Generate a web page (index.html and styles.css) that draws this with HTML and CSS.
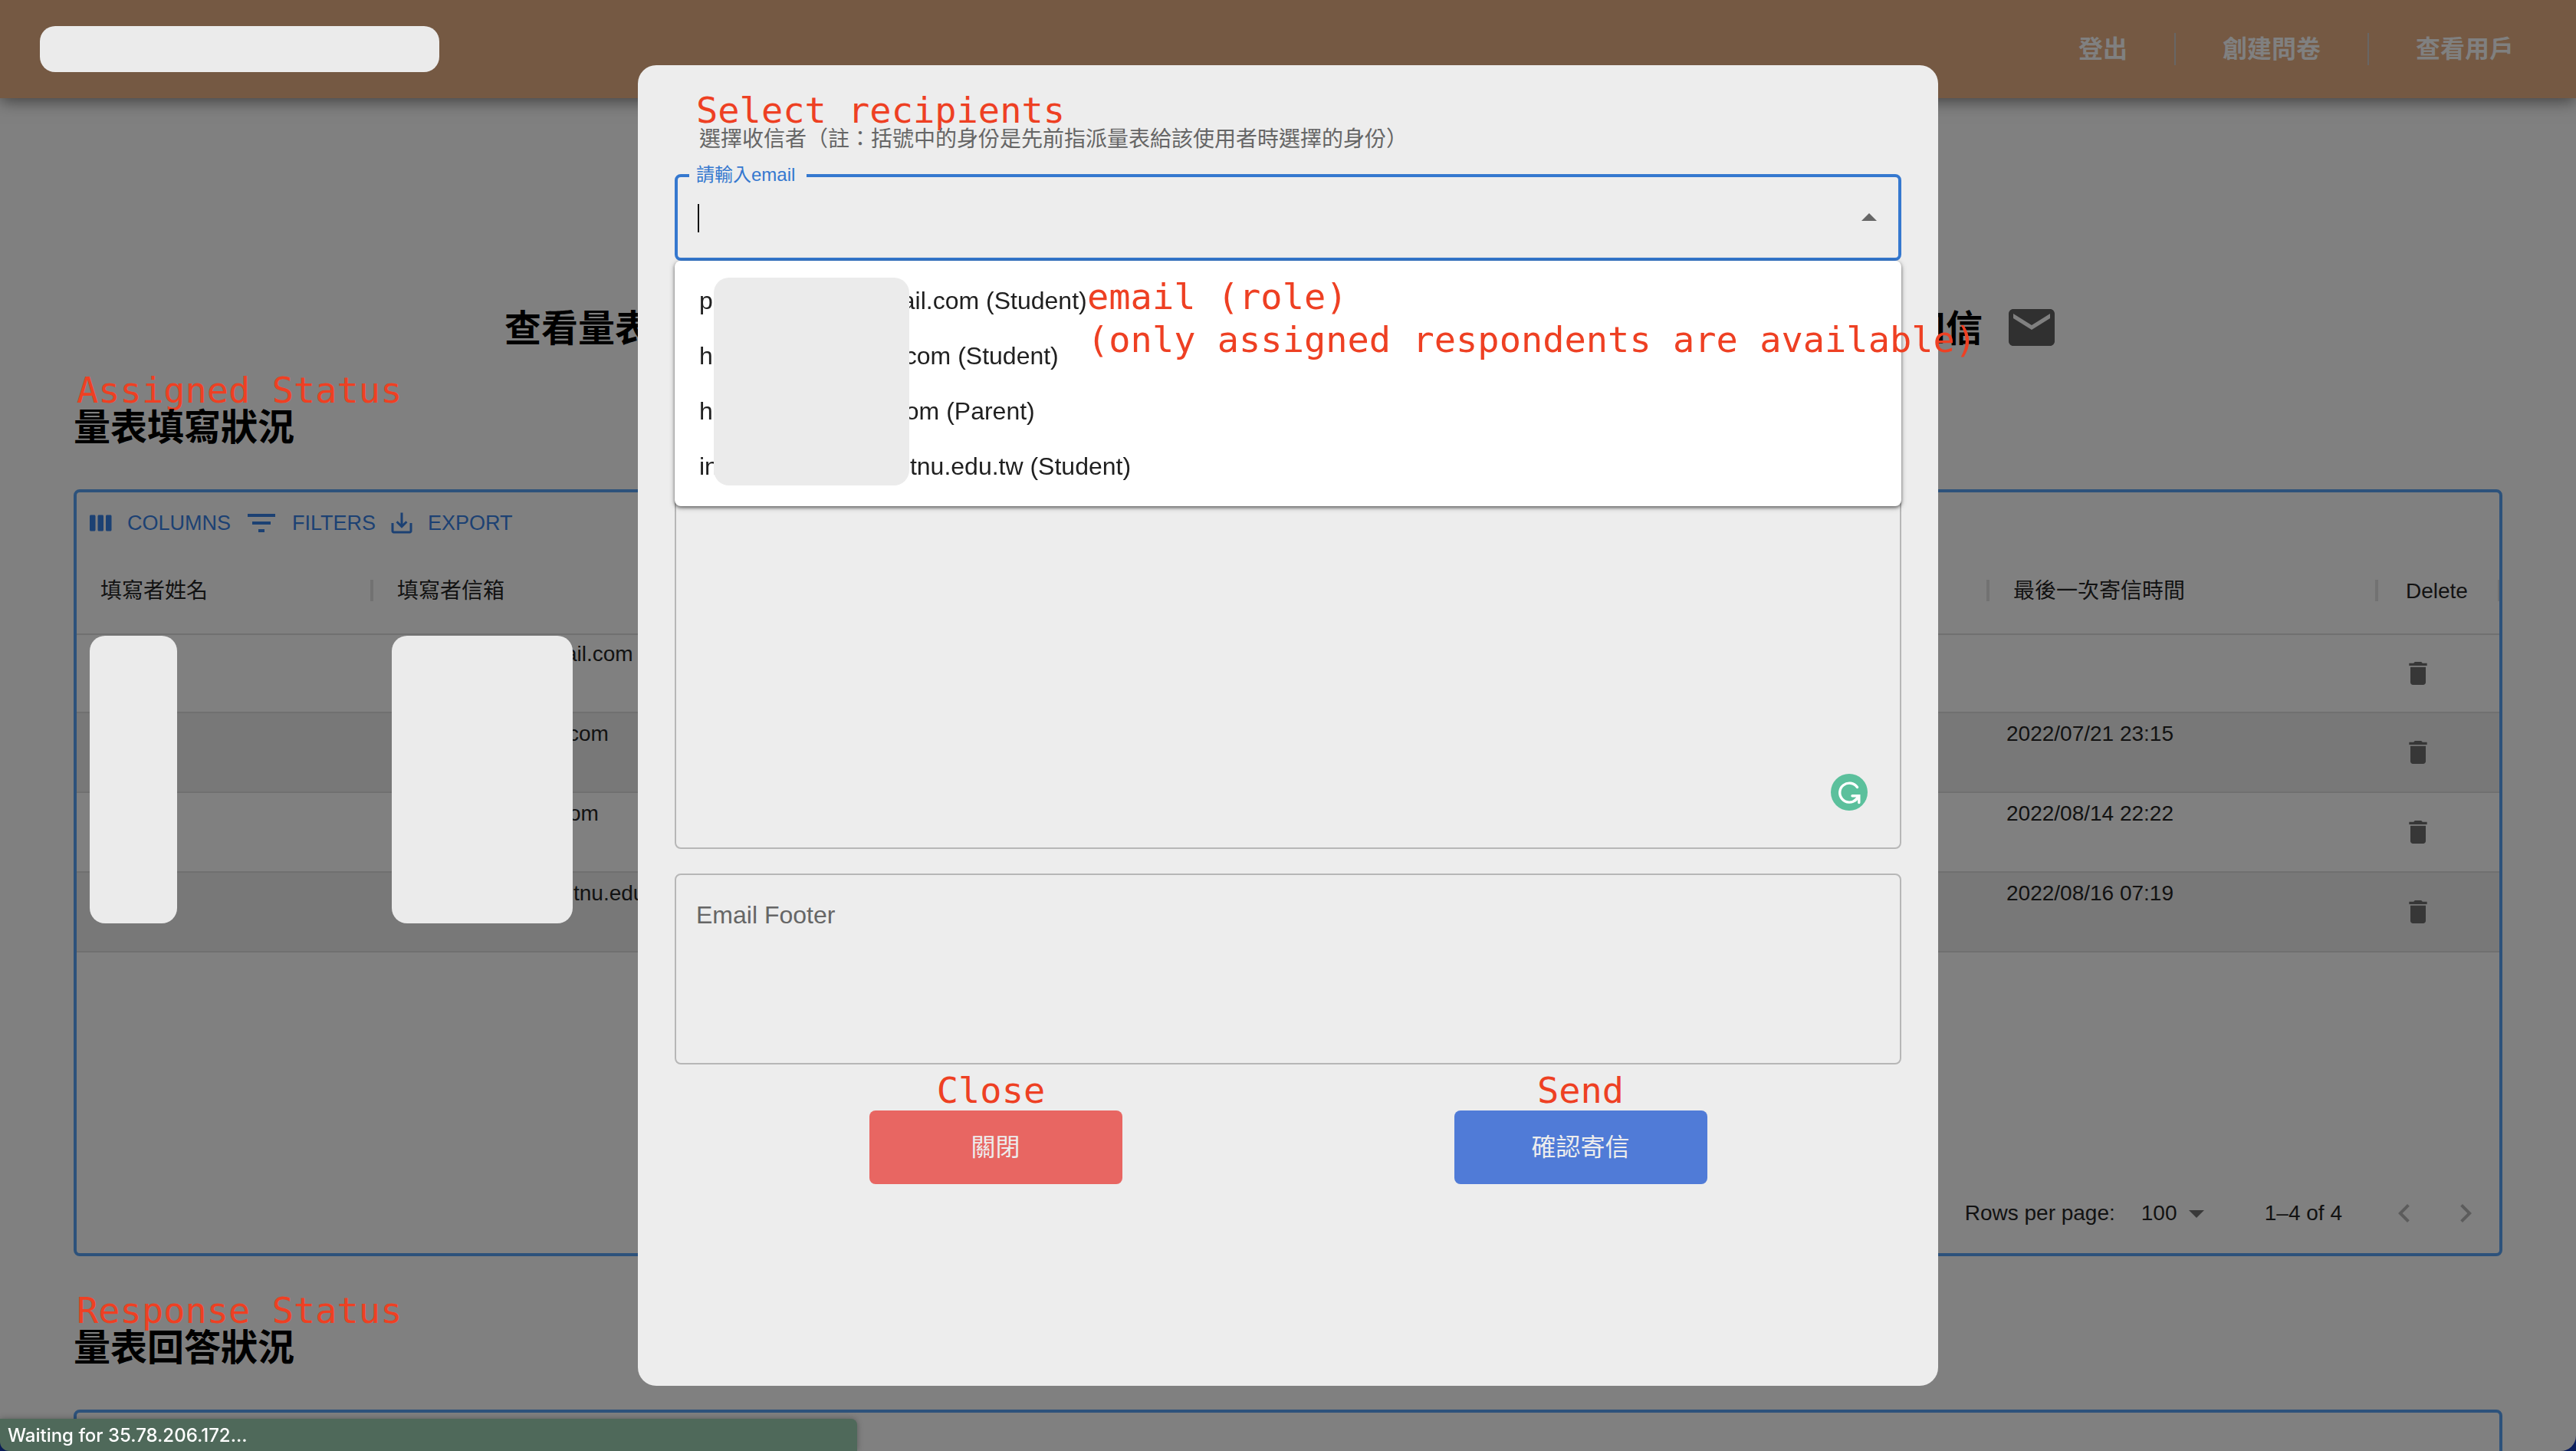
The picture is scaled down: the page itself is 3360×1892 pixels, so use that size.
FILE: index.html
```html
<!DOCTYPE html>
<html lang="zh-Hant">
<head>
<meta charset="utf-8">
<title>量表填寫狀況</title>
<link rel="stylesheet" href="styles.css">
</head>
<body>
<div class="page">
  <header class="topbar">
    <div class="mask brand-mask"></div>
    <nav class="nav">
      <a href="#">登出</a>
      <a href="#">創建問卷</a>
      <a href="#">查看用戶</a>
    </nav>
  </header>

  <main class="content">
    <div class="title-row">
      <h1 class="title"><span>查看量表</span><span>知信</span></h1>
      <button class="mail-button" type="button" aria-label="寄信">
        <svg width="72" height="72" viewBox="0 0 24 24"><path d="M20 4H4c-1.100 0-1.990.9-1.990 2L2 18c0 1.100.9 2 2 2h16c1.100 0 2-.9 2-2V6c0-1.100-.9-2-2-2zm0 4l-8 5-8-5V6l8 5 8-5v2z"/></svg>
      </button>
    </div>

    <section class="section">
      <p class="note">Assigned Status</p>
      <h2 class="heading">量表填寫狀況</h2>
      <div class="grid">
        <div class="toolbar">
          <button type="button" class="tool"><svg width="36" height="36" viewBox="0 0 24 24"><path d="M6 5H3c-.55 0-1 .45-1 1v12c0 .55.45 1 1 1h3c.55 0 1-.45 1-1V6c0-.55-.45-1-1-1zm14 0h-3c-.55 0-1 .45-1 1v12c0 .55.45 1 1 1h3c.55 0 1-.45 1-1V6c0-.55-.45-1-1-1zm-7 0h-3c-.55 0-1 .45-1 1v12c0 .55.45 1 1 1h3c.55 0 1-.45 1-1V6c0-.55-.45-1-1-1z"/></svg>COLUMNS</button>
          <button type="button" class="tool"><svg width="48" height="48" viewBox="0 0 24 24"><path d="M10 18h4v-2h-4v2zM3 6v2h18V6H3zm3 7h12v-2H6v2z"/></svg>FILTERS</button>
          <button type="button" class="tool"><svg width="36" height="36" viewBox="0 0 24 24"><path d="M19 12v7H5v-7H3v7c0 1.100.9 2 2 2h14c1.100 0 2-.9 2-2v-7h-2zm-6 .67l2.590-2.580L17 11.500l-5 5-5-5 1.410-1.410L11 12.670V3h2z"/></svg>EXPORT</button>
        </div>
        <table class="table">
          <colgroup><col class="col-name"><col class="col-mail"><col><col class="col-date"><col class="col-delete"></colgroup>
          <thead>
            <tr>
              <th><div class="th">填寫者姓名</div></th>
              <th><div class="th">填寫者信箱</div></th>
              <th><div class="th"></div></th>
              <th><div class="th">最後一次寄信時間</div></th>
              <th><div class="th th-delete">Delete</div></th>
            </tr>
          </thead>
          <tbody>
            <tr>
              <td></td><td><span class="hidden-part" style="width:228px"></span>ail.com</td><td></td><td></td>
              <td class="cell-icon"><button type="button" class="trash" aria-label="Delete"><svg width="40" height="40" viewBox="0 0 24 24"><path d="M6 19c0 1.100.9 2 2 2h8c1.100 0 2-.9 2-2V7H6v12zM19 4h-3.500l-1-1h-5l-1 1H5v2h14V4z"/></svg></button></td>
            </tr>
            <tr>
              <td></td><td><span class="hidden-part" style="width:232px"></span>com</td><td></td><td>2022/07/21 23:15</td>
              <td class="cell-icon"><button type="button" class="trash" aria-label="Delete"><svg width="40" height="40" viewBox="0 0 24 24"><path d="M6 19c0 1.100.9 2 2 2h8c1.100 0 2-.9 2-2V7H6v12zM19 4h-3.500l-1-1h-5l-1 1H5v2h14V4z"/></svg></button></td>
            </tr>
            <tr>
              <td></td><td><span class="hidden-part" style="width:233px"></span>om</td><td></td><td>2022/08/14 22:22</td>
              <td class="cell-icon"><button type="button" class="trash" aria-label="Delete"><svg width="40" height="40" viewBox="0 0 24 24"><path d="M6 19c0 1.100.9 2 2 2h8c1.100 0 2-.9 2-2V7H6v12zM19 4h-3.500l-1-1h-5l-1 1H5v2h14V4z"/></svg></button></td>
            </tr>
            <tr>
              <td></td><td><span class="hidden-part" style="width:239px"></span>tnu.edu.tw</td><td></td><td>2022/08/16 07:19</td>
              <td class="cell-icon"><button type="button" class="trash" aria-label="Delete"><svg width="40" height="40" viewBox="0 0 24 24"><path d="M6 19c0 1.100.9 2 2 2h8c1.100 0 2-.9 2-2V7H6v12zM19 4h-3.500l-1-1h-5l-1 1H5v2h14V4z"/></svg></button></td>
            </tr>
          </tbody>
        </table>
        <div class="mask name-mask"></div>
        <div class="mask mail-mask"></div>
        <div class="pager">
          <label for="rows">Rows per page:</label>
          <div class="rows-select">
            <select id="rows"><option>100</option></select>
            <svg width="48" height="48" viewBox="0 0 24 24"><path d="M7 10l5 5 5-5z"/></svg>
          </div>
          <span class="range">1–4 of 4</span>
          <button type="button" class="page-button" aria-label="Previous page"><svg width="48" height="48" viewBox="0 0 24 24"><path d="M15.410 16.590L10.830 12l4.580-4.590L14 6l-6 6 6 6z"/></svg></button>
          <button type="button" class="page-button" aria-label="Next page"><svg width="48" height="48" viewBox="0 0 24 24"><path d="M8.590 16.590L13.170 12 8.590 7.410 10 6l6 6-6 6z"/></svg></button>
        </div>
      </div>
    </section>

    <section class="section section-next">
      <p class="note">Response Status</p>
      <h2 class="heading">量表回答狀況</h2>
      <div class="grid"></div>
    </section>
  </main>
</div>

<div class="overlay">
  <form class="modal" role="dialog">
    <p class="note note-intro">Select recipients</p>
    <p class="intro">選擇收信者（註：括號中的身份是先前指派量表給該使用者時選擇的身份）</p>

    <div class="combo">
      <label for="email" class="combo-label">請輸入email</label>
      <input id="email" class="combo-input" type="text">
      <span class="caret"></span>
      <svg class="combo-arrow" width="48" height="48" viewBox="0 0 24 24"><path d="M7 14l5-5 5 5z"/></svg>
      <div class="dropdown">
        <ul class="options">
          <li>p<span class="hidden-part" style="width:246px"></span>ail.com (Student)</li>
          <li>h<span class="hidden-part" style="width:250px"></span>com (Student)</li>
          <li>h<span class="hidden-part" style="width:251px"></span>om (Parent)</li>
          <li>in<span class="hidden-part" style="width:250px"></span>tnu.edu.tw (Student)</li>
        </ul>
        <div class="mask option-mask"></div>
        <p class="note note-options">email (role)<br>(only assigned respondents are available)</p>
      </div>
    </div>

    <div class="box box-body">
      <textarea class="area" aria-label="Email Body"></textarea>
      <svg class="checker" width="48" height="48" viewBox="0 0 48 48"><circle cx="24" cy="24" r="24" fill="#5bc09c"/><path d="M34.500 17.500A12.500 12.500 0 1 0 33 33.500" fill="none" stroke="#fff" stroke-width="3.400" stroke-linecap="round"/><path d="M28 28.800H36.800V37.500M36.500 29.500L32 34.500" fill="none" stroke="#fff" stroke-width="3.400" stroke-linecap="round"/></svg>
    </div>

    <div class="box box-footer">
      <label for="footer" class="box-label">Email Footer</label>
      <textarea id="footer" class="area"></textarea>
    </div>

    <div class="actions">
      <div class="action action-close"><p class="note">Close</p><button type="button" class="button button-close">關閉</button></div>
      <div class="action"><p class="note">Send</p><button type="button" class="button button-send">確認寄信</button></div>
    </div>
  </form>
</div>

<div class="status">Waiting for 35.78.206.172...</div>
</body>
</html>
```
FILE: styles.css
```css
* { box-sizing: border-box; }

body {
  margin: 0;
  background: #0b1f5e;
  color: #121212;
  font-family: "Liberation Sans", "Noto Sans CJK TC", sans-serif;
  font-size: 28px;
  line-height: 40px;
}

h1, h2, p, ul { margin: 0; padding: 0; }
ul { list-style: none; }

button, input, textarea, select {
  margin: 0;
  padding: 0;
  border: 0;
  outline: 0;
  background: none;
  color: inherit;
  font: inherit;
}

svg { display: block; flex: none; fill: currentColor; }

.page {
  height: 100vh;
  overflow: hidden;
  background: #808080;
  border-radius: 0 0 20px 20px;
}

.mask { background: #ebebeb; border-radius: 20px; }
.hidden-part { display: inline-block; }

.note {
  color: #ee4023;
  font-family: "DejaVu Sans Mono", monospace;
  font-size: 47px;
  line-height: 56px;
  white-space: nowrap;
}

/* top bar */
.topbar {
  display: flex;
  align-items: center;
  justify-content: space-between;
  height: 128px;
  padding: 0 20px 0 52px;
  background: #755943;
  box-shadow: 0 4px 20px rgba(0, 0, 0, .5);
}
.brand-mask { width: 521px; height: 60px; }
.nav { display: flex; align-items: center; }
.nav a {
  padding: 0 61px;
  color: #808080;
  font-size: 32px;
  font-weight: 700;
  line-height: 42px;
  text-decoration: none;
}
.nav a + a { border-left: 2px solid #686664; }

/* page title */
.content { padding: 247px 96px 0; }
.title-row {
  display: flex;
  align-items: center;
  width: 2044px;
  max-width: 100%;
  margin: 0 auto;
}
.title {
  display: flex;
  flex: 1;
  justify-content: space-between;
  padding-top: 4px;
  color: #000;
  font-size: 48px;
  line-height: 72px;
}
.mail-button { padding: 16px; margin-left: 12px; color: #303030; }

/* sections */
.section { padding-top: 2px; }
.section-next { padding-top: 43px; }
.section > .note { padding-left: 4px; }
.heading {
  margin-bottom: 59px;
  color: #000;
  font-size: 48px;
  line-height: 42px;
}

/* data grid */
.grid {
  position: relative;
  display: flex;
  flex-direction: column;
  min-height: 1000px;
  border: 4px solid #2d527b;
  border-radius: 8px;
}
.toolbar { display: flex; padding: 8px 8px 0; }
.tool {
  display: flex;
  align-items: center;
  height: 64px;
  padding: 0 10px;
  color: #1c4173;
  font-size: 27px;
}
.tool svg { margin: 0 16px 0 -4px; }

.table {
  width: 100%;
  table-layout: fixed;
  border-collapse: separate;
  border-spacing: 0;
}
.col-name { width: 387px; }
.col-mail { width: 700px; }
.col-date { width: 507px; }
.col-delete { width: 158px; }
.table th {
  height: 114px;
  padding: 0;
  border-bottom: 2px solid #707070;
  font-weight: 400;
  text-align: left;
}
.th {
  height: 28px;
  padding-left: 31px;
  border-right: 4px solid #727272;
  line-height: 30px;
}
.th-delete { padding-left: 36px; border-right-width: 2px; }
.table td {
  height: 104px;
  padding: 7px 22px 0;
  border-bottom: 2px solid #707070;
  vertical-align: top;
  white-space: nowrap;
}
.table tbody tr:first-child td { height: 102px; padding-top: 5px; }
.table tbody tr:nth-child(even) { background: #787878; }
.table .cell-icon, .table tbody tr:first-child .cell-icon {
  padding: 0 32px;
  vertical-align: middle;
}
.trash { display: block; color: #373737; }

.name-mask, .mail-mask { position: absolute; top: 187px; height: 375px; }
.name-mask { left: 17px; width: 114px; }
.mail-mask { left: 411px; width: 236px; }

.pager {
  display: flex;
  align-items: center;
  justify-content: flex-end;
  height: 104px;
  margin-top: auto;
  padding-right: 4px;
}
.rows-select {
  display: flex;
  align-items: center;
  margin: 0 65px 0 34px;
}
.rows-select select { width: 48px; appearance: none; }
.rows-select svg { color: #3a3a3a; }
.range { margin-right: 41px; }
.page-button { padding: 16px; color: #5c5c5c; }

/* mail dialog */
.overlay {
  position: fixed;
  inset: 0;
  display: flex;
  align-items: center;
  justify-content: center;
}
.modal {
  width: 1696px;
  max-width: 96%;
  min-height: 91vh;
  padding: 31px 48px;
  background: #ededed;
  border-radius: 24px;
}
.note-intro { padding-left: 28px; }
.intro {
  padding-left: 32px;
  color: #666;
  line-height: 20px;
}

.combo {
  position: relative;
  height: 113px;
  margin: 35px 0 32px;
  border: 4px solid #3578cf;
  border-radius: 8px;
}
.combo-label {
  position: absolute;
  top: -17px;
  left: 15px;
  padding: 0 15px 0 9px;
  background: #ededed;
  color: #3578cf;
  font-size: 24px;
  line-height: 28px;
}
.combo-input { width: 100%; height: 100%; padding: 0 28px; font-size: 32px; }
.caret {
  position: absolute;
  top: 35px;
  left: 26px;
  width: 2px;
  height: 37px;
  background: #121212;
}
.combo-arrow { position: absolute; top: 29px; right: 14px; color: #666; }

.dropdown {
  position: absolute;
  z-index: 1;
  top: 109px;
  right: -4px;
  left: -4px;
  padding: 16px 0;
  background: #fff;
  border-radius: 8px;
  box-shadow: 0 2px 4px rgba(0, 0, 0, .5), 0 2px 8px rgba(0, 0, 0, .2);
}
.options li {
  padding-left: 32px;
  color: #202020;
  font-size: 32px;
  line-height: 72px;
  white-space: nowrap;
}
.option-mask {
  position: absolute;
  top: 22px;
  left: 51px;
  width: 255px;
  height: 271px;
}
.note-options { position: absolute; top: 19px; left: 538px; }

.box {
  position: relative;
  display: flex;
  flex-direction: column;
  padding: 32px 26px;
  border: 2px solid #b7b7b7;
  border-radius: 8px;
}
.box-body { height: 735px; }
.box-footer { height: 249px; margin-top: 32px; }
.box-label { color: #666; font-size: 32px; }
.area { flex: 1; width: 100%; min-height: 0; resize: none; font-size: 32px; }
.checker { position: absolute; right: 42px; bottom: 48px; }

.actions {
  display: flex;
  justify-content: space-around;
  padding: 8px 37px 0;
}
.action { display: flex; flex-direction: column; align-items: center; }
.action .note { line-height: 52px; }
.action-close .note { margin-right: 12px; }
.button {
  width: 330px;
  height: 96px;
  border-radius: 8px;
  color: #ededed;
  font-size: 32px;
}
.button-close { background: #e86662; }
.button-send { background: #507bd7; }

/* browser status line */
.status {
  position: fixed;
  bottom: 0;
  left: 0;
  width: 1118px;
  max-width: 100%;
  padding: 2px 10px 0;
  background: #4f695a;
  border-radius: 0 8px 0 12px;
  box-shadow: 0 0 8px rgba(0, 0, 0, .3);
  color: #fff;
  font-family: Inter, sans-serif;
  font-size: 24px;
  font-weight: 500;
}
```
